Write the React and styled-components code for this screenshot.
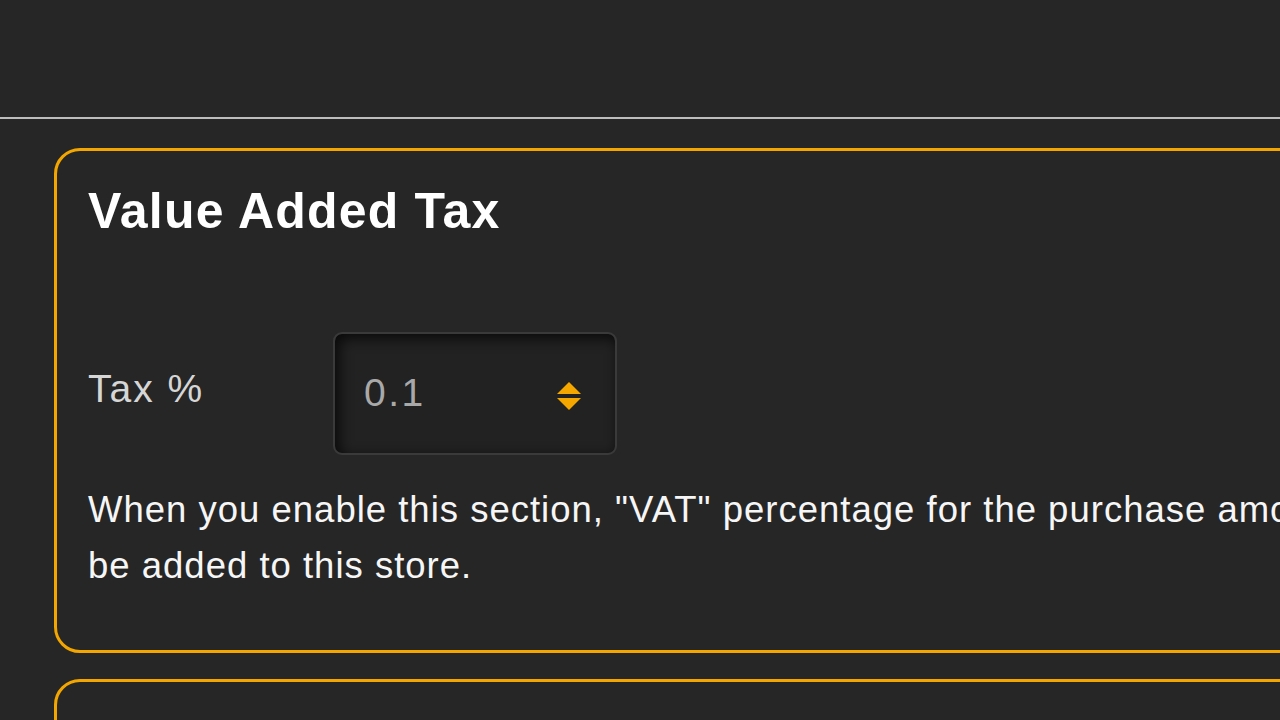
import React from "react";
import styled, { createGlobalStyle } from "styled-components";

const GlobalStyle = createGlobalStyle`
	html, body {
		margin: 0;
		padding: 0;
		background: #262626;
		overflow: hidden;
	}
	body {
		font-family: "Liberation Sans", Arial, Helvetica, sans-serif;
		color: #f4f4f4;
	}
`;

const Page = styled.div`
	width: 1280px;
	height: 720px;
	overflow: hidden;
	background: #262626;
`;

const TopBar = styled.header`
	height: 117px;
	border-bottom: 2px solid #bdbdbd;
`;

const Content = styled.main`
	display: flex;
	flex-direction: column;
	gap: 26px;
	padding: 29px 0 0 54px;
`;

const Card = styled.section`
	width: 1500px;
	flex-shrink: 0;
	box-sizing: border-box;
	border: 3px solid #f3a600;
	border-radius: 26px;
	padding: ${props => (props.empty ? "0" : "27px 31px 56px")};
	min-height: ${props => (props.empty ? "120px" : "auto")};
`;

const Title = styled.h2`
	margin: 0;
	font-size: 50px;
	font-weight: 700;
	line-height: 66px;
	letter-spacing: 1.2px;
	color: #ffffff;
`;

const FieldRow = styled.div`
	display: flex;
	align-items: center;
	margin-top: 88px;
`;

const Label = styled.label`
	width: 245px;
	font-size: 39px;
	line-height: 44px;
	color: #d6d6d6;
	letter-spacing: 2px;
	margin-top: -10px;
`;

const InputBox = styled.div`
	box-sizing: border-box;
	width: 284px;
	height: 123px;
	display: flex;
	align-items: center;
	justify-content: space-between;
	padding: 0 34px 0 29px;
	background: #222;
	border: 2px solid #3a3a3a;
	border-radius: 9px;
	box-shadow: inset 4px 4px 14px rgba(0, 0, 0, 0.75);
`;

const Value = styled.span`
	font-size: 39px;
	letter-spacing: 2.5px;
	color: #a9a9a9;
	margin-top: -2px;
`;

const Spinner = styled.svg`
	width: 24px;
	height: 28px;
	display: block;
	margin-top: 4px;
`;

const Help = styled.p`
	margin: 27px 0 0;
	font-size: 36.5px;
	line-height: 56px;
	letter-spacing: 1px;
	color: #f6f6f6;
	white-space: normal;
	width: 1360px;
`;

export default function App() {
	return (
		<Page>
			<GlobalStyle />
			<TopBar />
			<Content>
				<Card>
					<Title>Value Added Tax</Title>
					<FieldRow>
						<Label>Tax %</Label>
						<InputBox>
							<Value>0.1</Value>
							<Spinner viewBox="0 0 24 28">
								<path d="M12 0 L24 12 H0 Z" fill="#f5a700" />
								<path d="M0 16 H24 L12 28 Z" fill="#f5a700" />
							</Spinner>
						</InputBox>
					</FieldRow>
					<Help>
						When you enable this section, "VAT" percentage for the purchase amount will be added to this store.
					</Help>
				</Card>
				<Card empty />
			</Content>
		</Page>
	);
}
